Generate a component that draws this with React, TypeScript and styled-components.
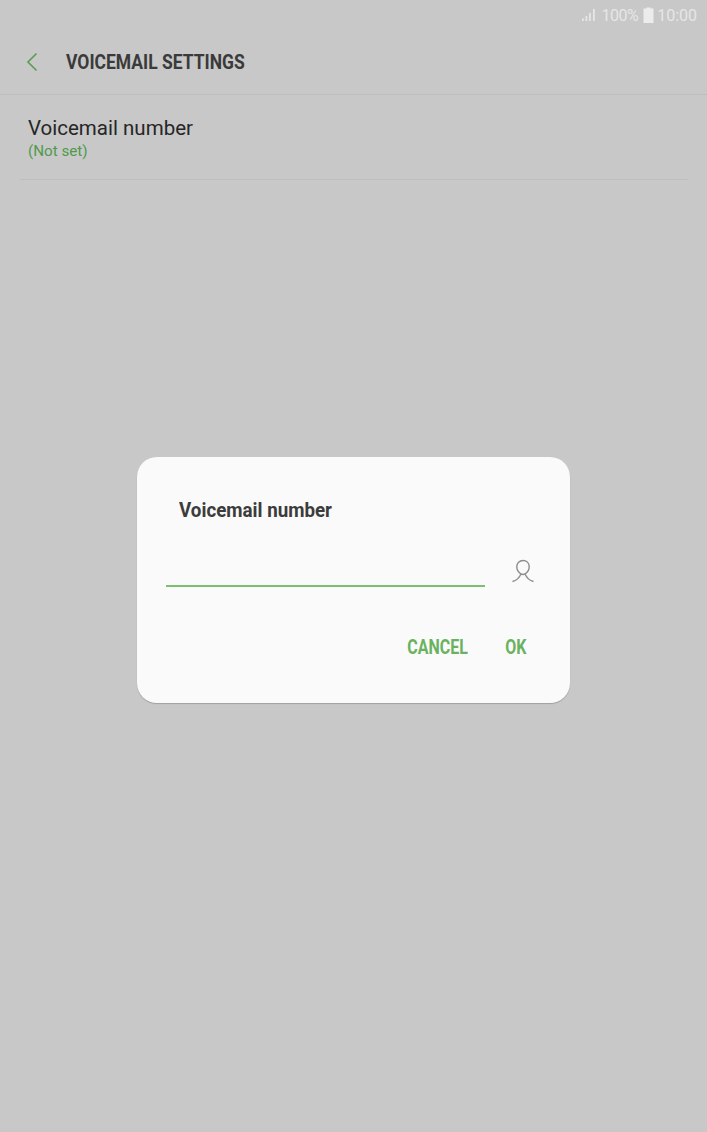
import React from "react";
import styled, { createGlobalStyle } from "styled-components";

const GlobalStyle = createGlobalStyle`
  html, body {
    margin: 0;
    padding: 0;
    background: #c8c8c8;
  }
  body {
    font-family: Roboto, "Liberation Sans", sans-serif;
  }
`;

export default function App() {
  return (
    <Page>
      <GlobalStyle />
      <StatusBar>
        <svg width="16" height="14" viewBox="0 0 16 14">
          <rect x="1" y="10.500" width="1.800" height="2.500" fill="#e6e6e6" />
          <rect x="4.500" y="8" width="1.800" height="5" fill="#e6e6e6" />
          <rect x="8" y="5" width="1.800" height="8" fill="#e6e6e6" />
          <rect x="12" y="1" width="1.800" height="12" fill="#e6e6e6" />
        </svg>
        <Percent>100%</Percent>
        <Battery width="11" height="16" viewBox="0 0 11 16">
          <path d="M3.500 0.500h4v1h3v14.500h-10v-14.500h3z" fill="#ececec" />
        </Battery>
        <StatusText>10:00</StatusText>
      </StatusBar>
      <Toolbar>
        <svg width="12" height="20" viewBox="0 0 12 20">
          <path d="M10.500 1.500L2 10l8.500 8.500" fill="none" stroke="#5c9e58" strokeWidth="1.700" />
        </svg>
        <ToolbarTitle>VOICEMAIL SETTINGS</ToolbarTitle>
      </Toolbar>
      <SettingRow>
        <RowTitle>Voicemail number</RowTitle>
        <RowValue>(Not set)</RowValue>
      </SettingRow>
      <Dialog>
        <DialogTitle>Voicemail number</DialogTitle>
        <InputRow>
          <InputLine />
          <ContactIcon width="22" height="26" viewBox="0 0 22 26">
            <path
              d="M11 2.500c-3.600 0-6.200 2.600-6.200 6.200 0 2.800 1.800 5.600 3.800 7 1.600 1 3.200 1 4.800 0 2-1.400 3.800-4.200 3.800-7 0-3.600-2.600-6.200-6.200-6.200z"
              fill="none"
              stroke="#8c8c8c"
              strokeWidth="1.400"
            />
            <path
              d="M.5 23.500c3.800-1 6.500-3 8.300-7.300M21.500 23.500c-3.800-1-6.500-3-8.300-7.300"
              fill="none"
              stroke="#8c8c8c"
              strokeWidth="1.400"
            />
          </ContactIcon>
        </InputRow>
        <DialogActions>
          <ActionButton>CANCEL</ActionButton>
          <ActionButton>OK</ActionButton>
        </DialogActions>
      </Dialog>
    </Page>
  );
}

const Page = styled.div`
  position: relative;
  height: 1132px;
  overflow: hidden;
  background: #c8c8c8;
`;

const StatusBar = styled.div`
  display: flex;
  align-items: center;
  justify-content: flex-end;
  gap: 4px;
  height: 30px;
  padding-right: 10px;
`;

const StatusText = styled.span`
  font-size: 16px;
  color: #e6e6e6;
`;

const Percent = styled(StatusText)`
  letter-spacing: -0.5px;
`;

const Battery = styled.svg`
  margin: 0 -1px 0 1px;
`;

const Toolbar = styled.div`
  display: flex;
  align-items: center;
  height: 64px;
  padding-left: 26px;
  border-bottom: 1px solid #bebebe;
`;

const ToolbarTitle = styled.h1`
  margin: 0 0 0 28px;
  font-size: 20px;
  font-weight: 700;
  color: #3a3a3a;
  white-space: nowrap;
  transform: scaleX(0.875);
  transform-origin: left center;
`;

const SettingRow = styled.div`
  display: flex;
  flex-direction: column;
  justify-content: center;
  height: 85px;
  margin: 0 19px 0 20px;
  padding: 1px 0 0 8px;
  border-bottom: 1px solid #bebebe;
  box-sizing: border-box;
`;

const RowTitle = styled.div`
  font-size: 20.500px;
  line-height: 26px;
  color: #262626;
`;

const RowValue = styled.div`
  font-size: 15.200px;
  line-height: 20px;
  color: #4f9a4c;
`;

const Dialog = styled.div`
  position: absolute;
  left: 137px;
  top: 457px;
  width: 433px;
  height: 246px;
  box-sizing: border-box;
  padding: 40px 36px 0 29px;
  background: #fafafa;
  border-radius: 20px;
  box-shadow: 0 1px 1px rgba(0, 0, 0, 0.2);
`;

const DialogTitle = styled.h2`
  margin: 0 0 0 13px;
  font-size: 20.500px;
  line-height: 26px;
  font-weight: 700;
  color: #3c3c3c;
  white-space: nowrap;
  transform: scaleX(0.915);
  transform-origin: left center;
`;

const InputRow = styled.div`
  display: flex;
  align-items: flex-end;
  justify-content: space-between;
  margin-top: 24px;
  height: 40px;
`;

const InputLine = styled.div`
  width: 319px;
  height: 2px;
  background: #7cbf70;
`;

const ContactIcon = styled.svg`
  margin-bottom: 3px;
`;

const DialogActions = styled.div`
  display: flex;
  justify-content: flex-end;
  gap: 33px;
  margin: 48px -6px 0 0;
  padding-right: 13px;
`;

const ActionButton = styled.button`
  padding: 0;
  border: 0;
  background: none;
  font-family: Roboto, sans-serif;
  font-size: 20px;
  line-height: 24px;
  font-weight: 700;
  color: #6ab25f;
  transform: scaleX(0.8);
  transform-origin: right center;
`;
